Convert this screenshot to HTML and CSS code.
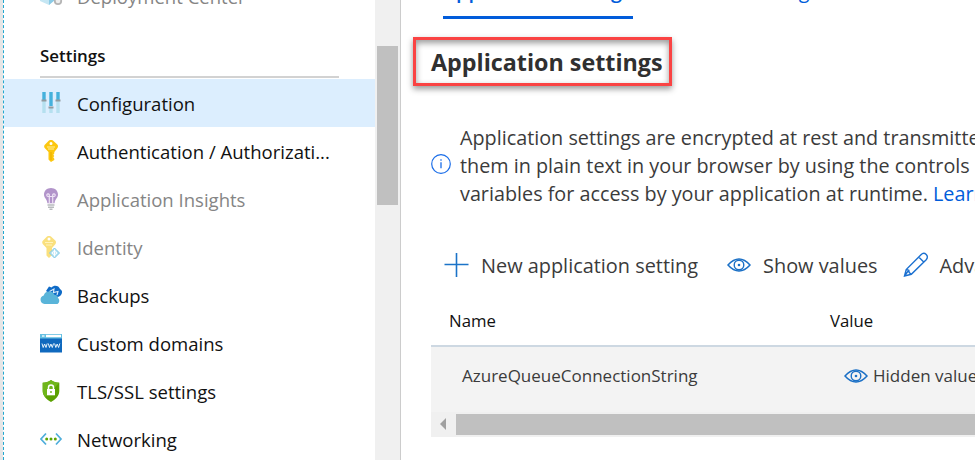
FILE: index.html
```html
<!DOCTYPE html>
<html lang="en">
<head>
<meta charset="utf-8">
<title>Configuration</title>
<link rel="stylesheet" href="styles.css">
</head>
<body>
<div class="app">
  <nav class="sidebar">
    <div class="menu">
      <a class="item dim first">
        <svg class="icon" viewBox="0 0 24 24"><path d="M0 6l9-4 6 3v9l-6 6-9-4z" fill="#c5e6f3"/><path d="M9 9l6-4v10l-6 5z" fill="#8bcbe6"/><circle cx="18" cy="16" r="3.2" fill="#eee" stroke="#b5b5b5" stroke-width="1.8"/></svg>
        <span>Deployment Center</span>
      </a>
      <h2 class="group">Settings</h2>
      <a class="item active">
        <svg class="icon" viewBox="0 1 24 24"><path d="M4 1v8M11 1v14M18 1v8" stroke="#45b1dc" stroke-width="3.4"/><path d="M4 10v12M11 17v5M18 10v12" stroke="#b5e0ef" stroke-width="3.4"/><path d="M1.5 9.500h5M8.500 16.500h5M15.500 9.500h5" stroke="#929ba0" stroke-width="1.8"/></svg>
        <span>Configuration</span>
      </a>
      <a class="item">
        <svg class="icon" viewBox="0 0 24 24"><path fill-rule="evenodd" d="M11 0c1.200 0 2 .5 3 1.400l3.300 3.200c1 1 .9 2.300.2 3.300L14.300 12v1.500l-1 1.200 1 1.300-1 1.300 1 1.500V20L11 22l-2.500-2.500V12L4.700 8C3.900 7 4 5.600 4.800 4.700L8 1.400C9 .5 9.800 0 11 0zm0 2a1.500 1.500 0 100 3 1.500 1.500 0 000-3z" fill="#fcc70f"/><path d="M7 7h8M8 9h6" stroke="#fff0a0" stroke-width="1"/><path d="M11 12v8" stroke="#e9ad00" stroke-width="1"/></svg>
        <span>Authentication / Authorizati...</span>
      </a>
      <a class="item dim">
        <svg class="icon" viewBox="0 0 24 24"><path d="M11 0c4 0 7 2.800 7 6.600 0 3.400-3 4.600-3.400 8.700H7.400C7 11.200 4 10 4 6.600 4 2.800 7 0 11 0z" fill="#b294ca"/><path d="M9.300 15V8.500M12.700 15V8.500M9.300 8.500H8a1.300 1.300 0 111.300-1.800v1.800h3.400V6.700A1.300 1.300 0 1114 8.500h-1.300" fill="none" stroke="#eee3f5" stroke-width="1.2"/><path d="M7.500 17h7M8 19.200h6M9.500 21.200h3" stroke="#b7babd" stroke-width="1.4"/></svg>
        <span>Application Insights</span>
      </a>
      <a class="item dim">
        <svg class="icon" viewBox="0 0 24 24"><path fill-rule="evenodd" d="M9 0c1.200 0 2 .5 3 1.400l3.300 3.200c1 1 .8 2.300.2 3.300L12 12v7l-3 3-2.500-2.500V12L2.700 8C2 7 2 5.600 2.800 4.700L6 1.400C7 .5 7.800 0 9 0zm0 1.500a1.500 1.500 0 100 3 1.500 1.500 0 000-3z" fill="#fae07d"/><path d="M5 6.500h8M6 9h6" stroke="#fff3bd" stroke-width="1"/><path d="M14.500 12l5 5-5 5-5-5z" fill="#b9e3f3" stroke="#80c8e5"/><path d="M14.500 13.500v7M12 17l2.500-2 2.500 2-2.500 2z" fill="none" stroke="#fff"/></svg>
        <span>Identity</span>
      </a>
      <a class="item">
        <svg class="icon" viewBox="0 0 24 24"><path d="M6 7l3-4.500 2.500 1C14 .5 19 1.500 20 5c3 1.500 2.500 5 0 7l-4 2z" fill="#0f6bc7"/><path d="M9.500 7.500L14 5l-.5 3.500 4.500-1-1 3.500" fill="none" stroke="#dceefa" stroke-width="1.1"/><path d="M4.500 20A4.400 4.400 0 013.700 11.400 5.800 5.800 0 0114.400 10.800c3 .1 3.600 2.200 3.500 3.100 2.200 1 1.800 6.100-1.500 6.100z" fill="#59b4d9"/></svg>
        <span>Backups</span>
      </a>
      <a class="item">
        <svg class="icon" viewBox="0 1 24 24"><path d="M0 3h22v18.500H0z" fill="#1069be"/><path d="M0 3h22v4.500H0z" fill="#65c0e2"/><path d="M6 3.800h15v2.400H6z" fill="#fff"/><path d="M2 5h2.500" stroke="#fff" stroke-width="1.3"/><path d="M2 12.500l1.200 4 1.400-3.500L6 16.500l1.200-4M8.300 12.500l1.200 4 1.400-3.500 1.400 3.500 1.200-4M14.600 12.500l1.200 4 1.400-3.500 1.400 3.500 1.200-4" fill="none" stroke="#e4f2fb" stroke-width="1"/></svg>
        <span>Custom domains</span>
      </a>
      <a class="item">
        <svg class="icon" viewBox="0 0 24 24"><path d="M11 0c2.500 2 5 2.700 8.300 2.700V11c0 5-4 8.600-8.300 11-4.300-2.400-8.300-6-8.300-11V2.700C6 2.700 8.500 2 11 0z" fill="#5ba100"/><path d="M11 0c2.500 2 5 2.700 8.300 2.700L5.500 17C3.800 15.200 2.700 13.300 2.700 11V2.700C6 2.700 8.500 2 11 0z" fill="#70b61b"/><path d="M7 9h8v6.300H7z" fill="#fff"/><path d="M8.500 9V7.500a2.500 2.500 0 015 0V9" fill="none" stroke="#fff" stroke-width="1.5"/><path d="M11 11v2" stroke="#70b61b" stroke-width="1.4"/></svg>
        <span>TLS/SSL settings</span>
      </a>
      <a class="item">
        <svg class="icon" viewBox="0 0 24 24"><path d="M6 5.500L1 11l5 5.500M16 5.500l5 5.500-5 5.500" fill="none" stroke="#4faedb" stroke-width="1.7"/><g fill="#5ba500"><circle cx="6.7" cy="11" r="1.5"/><circle cx="11" cy="11" r="1.5"/><circle cx="15.3" cy="11" r="1.5"/></g></svg>
        <span>Networking</span>
      </a>
    </div>
    <div class="vscroll"><div class="vthumb"></div></div>
  </nav>
  <main class="main">
    <div class="tabs"><span class="tab selected"><span>Application settings</span></span><span class="tab"><span>General settings</span></span></div>
    <h1 class="callout">Application settings</h1>
    <div class="info">
      <svg class="info-icon" viewBox="0 0 20 20"><circle cx="10" cy="10" r="9.3" fill="none" stroke="#1a6de8" stroke-width="1.2"/><path d="M10 8.200v6M10 5.200v1.600" stroke="#1a6de8" stroke-width="1.3"/></svg>
      <p>Application settings are encrypted at rest and transmitted<br>them in plain text in your browser by using the controls<br>variables for access by your application at runtime. <a class="link">Learn</a></p>
    </div>
    <div class="toolbar">
      <svg class="plus" viewBox="0 0 26 26"><path d="M13.500 1v24M1.500 12.500h24" stroke="#1b73c8" stroke-width="1.6"/></svg>
      <span>New application setting</span>
      <svg class="eye" viewBox="0 0 24 14"><path d="M1 7C5 2.500 8.500 1 12 1s7 1.500 11 6c-4 4.500-7.500 6-11 6S5 11.500 1 7z" fill="none" stroke="#1b70c6" stroke-width="1.5"/><circle cx="12" cy="7" r="4.8" fill="none" stroke="#1b70c6" stroke-width="1.4"/><circle cx="12" cy="7" r="1.3" fill="#1b70c6"/></svg>
      <span class="show">Show values</span>
      <svg class="pencil" viewBox="0 0 26 26"><path d="M1.500 24L3.200 17.500 18 2.700c3.500-3.500 8.700 1.300 5.200 5L8.300 22.300zM15.700 5l5.300 5.300M3.200 17.500l2.600.7.4 2.400 2.100 1.700M1.500 24l4.300-5.800" fill="none" stroke="#1b70d0" stroke-width="1.4"/></svg>
      <span>Advanced edit</span>
    </div>
    <div class="table">
      <div class="thead"><span class="name">Name</span><span>Value</span></div>
      <div class="row">
        <span class="key">AzureQueueConnectionString</span>
        <svg class="eye" viewBox="0 0 24 14"><path d="M1 7C5 2.500 8.500 1 12 1s7 1.500 11 6c-4 4.500-7.500 6-11 6S5 11.500 1 7z" fill="none" stroke="#1b70c6" stroke-width="1.5"/><circle cx="12" cy="7" r="4.8" fill="none" stroke="#1b70c6" stroke-width="1.4"/><circle cx="12" cy="7" r="1.3" fill="#1b70c6"/></svg><span class="hidden-value">Hidden value.</span>
      </div>
      <div class="hscroll"><svg class="arrow" viewBox="0 0 6 12"><path d="M6 0v12L0 6z" fill="#a0a0a0"/></svg><div class="hthumb"></div></div>
    </div>
  </main>
</div>
</body>
</html>
```

FILE: styles.css
```css
* { box-sizing: border-box; }
body { margin: 0; width: 975px; height: 460px; overflow: hidden; background: #fff; font-family: "Open Sans", "Noto Sans", sans-serif; color: #111; }
.app { display: flex; height: 460px; border-left: 3px solid #e6e6e6; }
.sidebar { display: flex; flex: 0 0 398px; border-right: 1px solid #ccc; }
.menu { flex: 1; height: 460px; overflow: hidden; border-left: 1px dashed #22a7cf; }
.item { display: flex; align-items: center; height: 48px; padding-left: 36px; font-size: 18.55px; white-space: nowrap; }
.item .icon { width: 24px; height: 24px; margin: 2px 13px 0 0; flex: none; }
.item.first { margin-top: -28px; }
.dim { color: #858585; }
.active { background: #dceefe; }
.group { margin: 0 36px 1px 36px; height: 58px; padding-top: 24px; border-bottom: 2px solid #d2d2d2; font-size: 16.9px; line-height: 24px; font-weight: 600; }
.vscroll { width: 25px; background: #f0f0f0; padding: 46px 2px 0; }
.vthumb { height: 159px; background: #c0c0c0; }
.main { flex: 1; overflow: hidden; padding-left: 30px; white-space: nowrap; }
.tabs { display: flex; height: 19px; padding-left: 12px; gap: 36px; }
.tab { height: 19px; width: 190px; font-size: 19.8px; color: #015cda; }
.tab span { display: block; margin-top: -21px; line-height: 24px; }
.tab.selected { border-bottom: 3px solid #015cda; font-weight: 600; }
.callout { margin: 18px 0 0 -18px; width: 259px; height: 49px; border: 3px solid #fa4343; padding-left: 15px; font-size: 23.3px; line-height: 45px; font-weight: 700; color: #303030; box-shadow: 0 3px 6px #999, inset 0 3px 6px #999; }
.info { display: flex; margin-top: 38px; align-items: center; gap: 9px; font-size: 19.8px; line-height: 28px; color: #3b3b3b; }
.info p { margin: 0; }
.info-icon { width: 20px; height: 20px; margin-bottom: 4px; flex: none; }
.link { color: #015cda; }
.toolbar { display: flex; align-items: center; margin-top: 41px; height: 32px; padding-left: 12px; font-size: 19.9px; color: #3b3b3b; }
.toolbar span { margin-left: 12px; margin-right: 28px; }
.toolbar .show { margin-right: 25px; }
.plus, .pencil { width: 26px; height: 26px; flex: none; }
.toolbar .pencil { margin-right: -1px; }
.eye { width: 24px; height: 14px; flex: none; }
.toolbar .eye { margin-left: 1px; }
.thead { display: flex; height: 66px; padding: 27px 0 0 18px; font-size: 16.8px; line-height: 26px; border-bottom: 2px solid #cdd8e2; }
.name { width: 381px; flex: none; }
.row { display: flex; align-items: center; height: 65px; background: #f3f3f3; padding: 0 0 8px 31px; font-size: 17px; color: #3b3b3b; }
.key { width: 382px; flex: none; }
.hidden-value { margin-left: 5px; }
.hscroll { display: flex; background: #f0f0f0; height: 25px; padding: 2px 0 2px 9px; }
.arrow { width: 6px; height: 12px; margin: 4px 10px 0 0; }
.hthumb { flex: 1; background: #c0c0c0; }
```
